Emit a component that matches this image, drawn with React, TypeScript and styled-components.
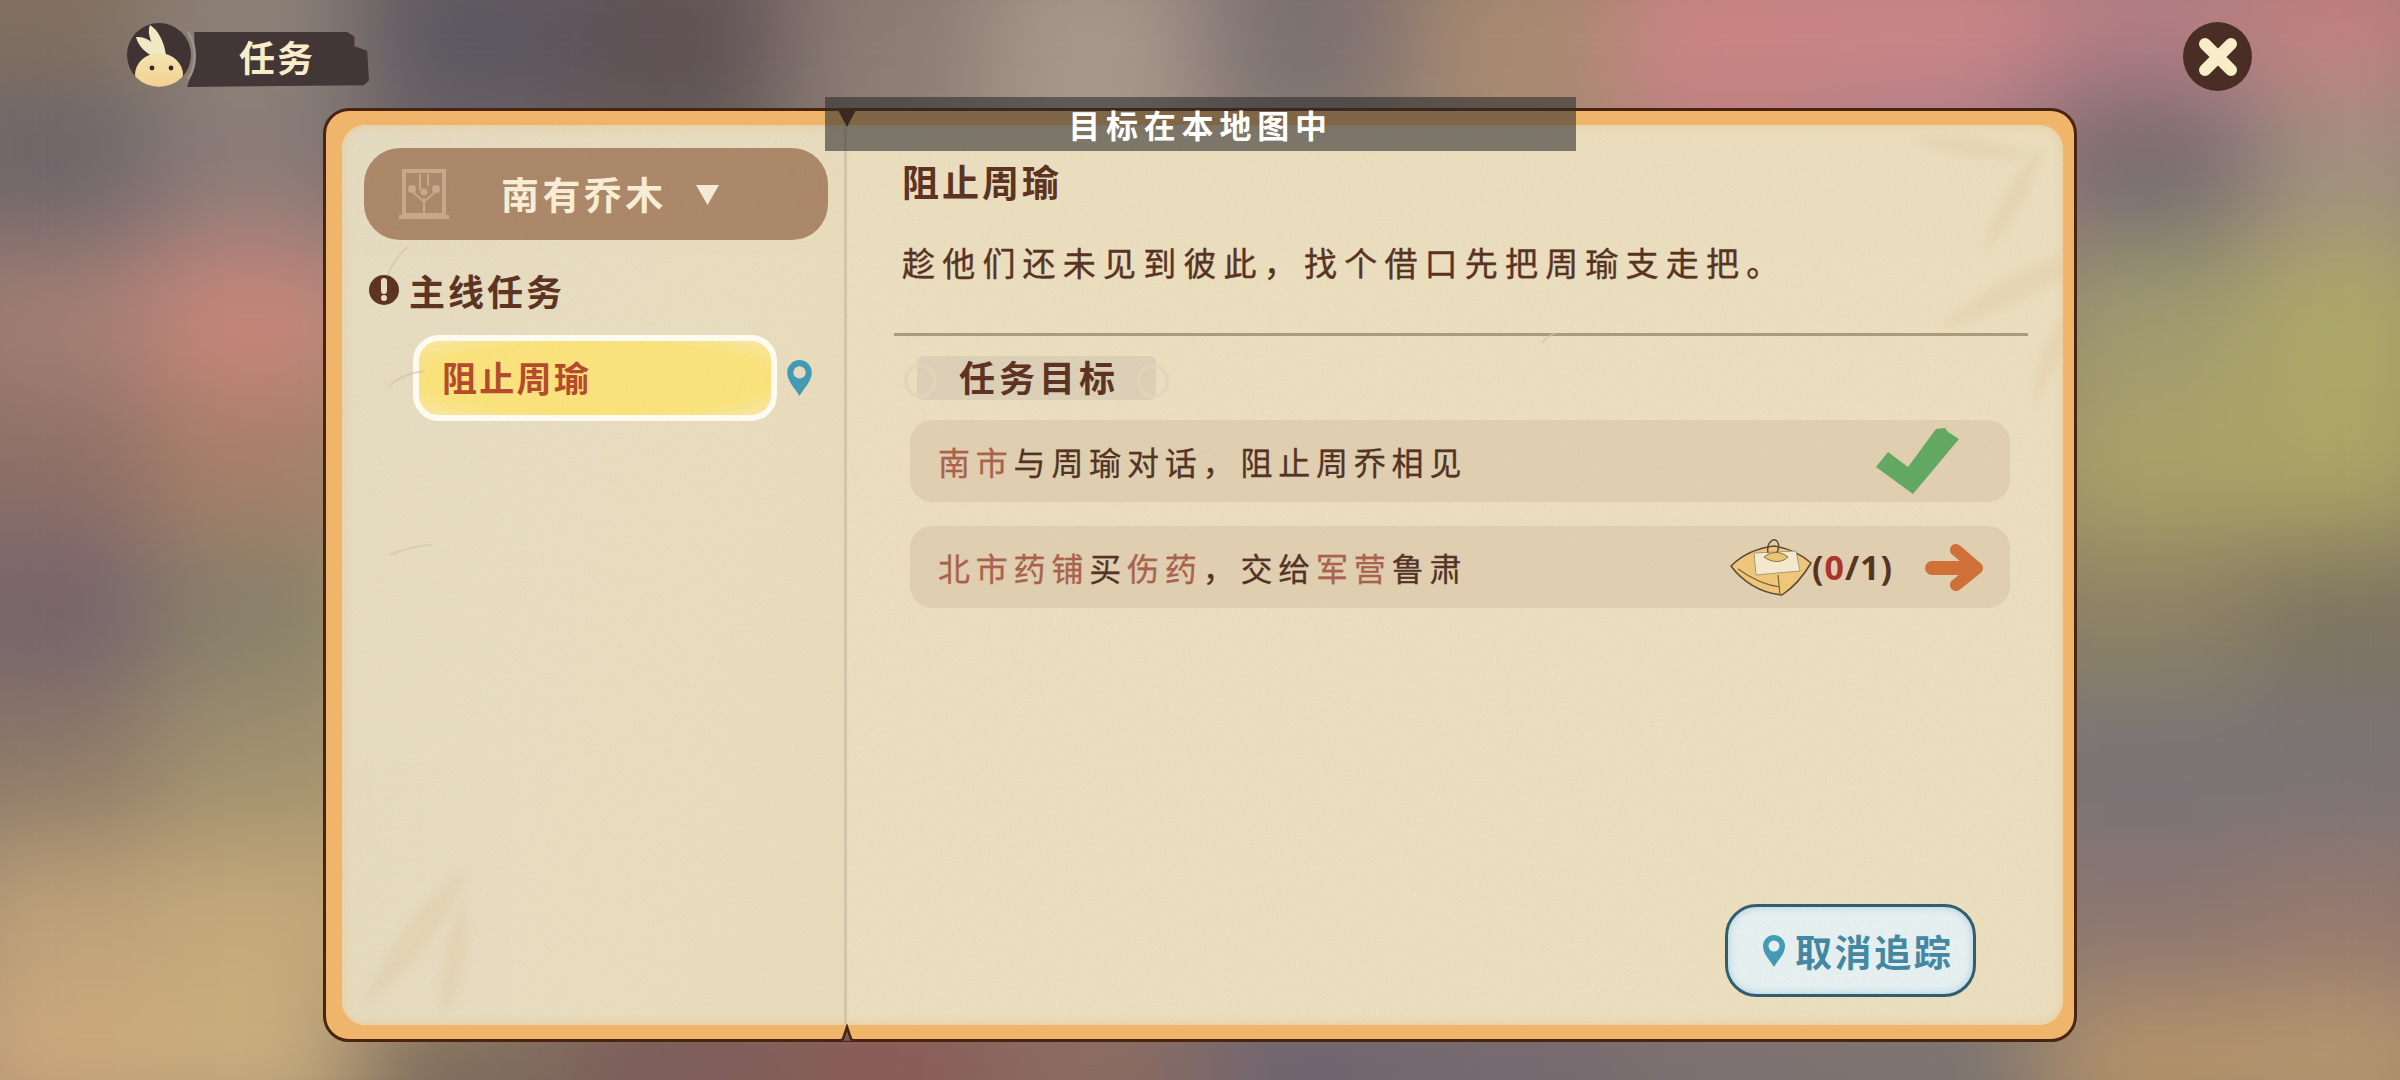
import styled, { createGlobalStyle } from 'styled-components';

const GlobalStyle = createGlobalStyle`
  html, body {
    margin: 0;
    padding: 0;
    background: #7f7068;
  }
  * {
    box-sizing: border-box;
  }
`;

const font = `'Noto Sans CJK SC', 'Noto Sans', sans-serif`;

// blurred scene behind the book, 12 x 8 colour patches
const sceneTiles = [
  ['#82705f', '#8e8278', '#5b5660', '#5e5054', '#8c7c74', '#a8988c', '#7c7070', '#a98a70', '#cf8585', '#d08688', '#b87f86', '#c58080'],
  ['#6c656a', '#8a7c78', '#6a6266', '#665a58', '#8d7f76', '#a8988a', '#857a72', '#a68b72', '#b78080', '#a87f86', '#756a70', '#a09080'],
  ['#a37f74', '#c8867a', '#9a8a7c', '#8a7a70', '#8a7a70', '#8a7a70', '#8a7a70', '#8a7a70', '#8a7a70', '#85786e', '#a09a70', '#ada868'],
  ['#8e7066', '#a87f68', '#9a8a70', '#8a7a70', '#8a7a70', '#8a7a70', '#8a7a70', '#8a7a70', '#8a7a70', '#8f8566', '#aaa268', '#aca565'],
  ['#75636c', '#87806a', '#a89a70', '#8a7a70', '#8a7a70', '#8a7a70', '#8a7a70', '#8a7a70', '#8a7a70', '#8a7f64', '#8d8264', '#7e7460'],
  ['#8e7a68', '#a0906e', '#b09a72', '#8a7a70', '#8a7a70', '#8a7a70', '#8a7a70', '#8a7a70', '#8a7a70', '#7c7674', '#787478', '#7a7476'],
  ['#bda279', '#c4a97a', '#b89f74', '#8a7a70', '#8a7a70', '#8a7a70', '#8a7a70', '#8a7a70', '#8a7a70', '#8b7a70', '#8b7570', '#95796e'],
  ['#cfa87c', '#c9ae7e', '#7d6b5c', '#7c5a58', '#8b5a54', '#8c6a60', '#6e6470', '#746870', '#7d7072', '#7c7470', '#b5946a', '#b7986f'],
];

const Page = styled.div`
  position: relative;
  width: 2400px;
  height: 1080px;
  overflow: hidden;
  padding: 22px 148px 0 126px;
  font-family: ${font};
`;

const Scene = styled.div`
  position: absolute;
  inset: -60px;
  display: grid;
  grid-template-columns: repeat(12, 1fr);
  grid-template-rows: repeat(8, 1fr);
  filter: blur(52px);
`;

const Tile = styled.div<{ $color: string }>`
  background: ${(p) => p.$color};
`;

const Header = styled.header`
  position: relative;
  display: flex;
  justify-content: space-between;
  align-items: flex-start;
  height: 70px;
`;

const Badge = styled.div`
  display: flex;
  align-items: center;
`;

const Avatar = styled.svg`
  display: block;
  width: 70px;
  height: 66px;
  margin-right: -9px;
  position: relative;
  z-index: 1;
`;

const BadgeLabel = styled.div`
  width: 182px;
  height: 55px;
  margin-top: 9px;
  padding-left: 52px;
  background: #433637;
  color: #f8edc8;
  font-size: 36px;
  font-weight: 700;
  line-height: 49px;
  letter-spacing: 2px;
  clip-path: polygon(4% 0, 88% 0, 92% 8%, 92% 26%, 99% 34%, 100% 88%, 97% 97%, 0 100%, 4% 60%);
`;

const CloseButton = styled.button`
  width: 69px;
  height: 69px;
  padding: 0;
  border: 0;
  border-radius: 50%;
  background: radial-gradient(circle, #4a2e25 78%, #5d4741 100%);
  display: flex;
  align-items: center;
  justify-content: center;
`;

const Book = styled.main`
  position: relative;
  width: 1754px;
  height: 934px;
  margin: 16px 0 0 197px;
  padding: 14px 11px 14px 16px;
  border: 3px solid #4a2412;
  border-radius: 26px;
  background: #efb56b;
`;

const Paper = styled.div`
  position: relative;
  display: flex;
  height: 100%;
  border-radius: 24px;
  overflow: hidden;
  background: #ebdfc0;

  &::after {
    content: '';
    position: absolute;
    inset: 0;
    border-radius: 24px;
    box-shadow: inset 0 0 9px 2px rgba(236, 196, 140, 0.55);
    pointer-events: none;
  }
`;

const Toast = styled.div`
  position: absolute;
  top: -14px;
  left: 499px;
  width: 751px;
  height: 54px;
  padding-top: 1px;
  background: rgba(45, 45, 45, 0.58);
  color: #fff;
  font-size: 32px;
  font-weight: 700;
  line-height: 52px;
  letter-spacing: 5.8px;
  text-align: center;
  z-index: 3;
`;

const Notch = styled.svg<{ $bottom?: boolean }>`
  position: absolute;
  left: 512px;
  width: 18px;
  height: 18px;
  ${(p) => (p.$bottom ? 'bottom: -3px;' : 'top: -1px;')}
  z-index: 2;
`;

const Decor = styled.svg`
  position: absolute;
  inset: 0;
  width: 100%;
  height: 100%;
  pointer-events: none;
`;

const SoftLeaves = styled.g`
  filter: blur(4px);
`;

const LeftPage = styled.aside`
  position: relative;
  flex: 0 0 505px;
  padding: 23px 16px 0 22px;
  background: linear-gradient(100deg, #e5dcc3 0%, #e8ddbf 60%, #e9dcbc 100%);
  border-right: 3px solid #d2c7ab;
`;

const MapSelect = styled.button`
  display: flex;
  align-items: center;
  width: 100%;
  height: 92px;
  padding: 0 0 0 34px;
  border: 0;
  border-radius: 36px;
  background: #ab8769;
  color: #f9efd8;
  font-family: ${font};
  font-size: 38px;
  font-weight: 700;
  letter-spacing: 3.4px;
`;

const MapName = styled.span`
  margin-left: 51px;
  margin-right: 28px;
  margin-top: -4px;
`;

const SectionTitle = styled.h3`
  display: flex;
  align-items: center;
  gap: 10px;
  height: 40px;
  margin: 30px 0 0 5px;
  color: #5a3020;
  font-size: 36px;
  font-weight: 700;
  letter-spacing: 3px;
`;

const QuestRow = styled.div`
  display: flex;
  align-items: center;
  gap: 9px;
  margin: 25px 0 0 49px;
`;

const QuestItem = styled.div`
  width: 364px;
  height: 86px;
  padding-left: 23px;
  border: 6px solid #fffdf4;
  border-radius: 26px;
  background: radial-gradient(ellipse at center, #fbe37c 70%, #f8e9a8 100%);
  color: #b5482a;
  font-size: 35px;
  font-weight: 700;
  line-height: 72px;
  letter-spacing: 2.3px;
`;

const RightPage = styled.section`
  position: relative;
  flex: 1;
  display: flex;
  flex-direction: column;
  padding: 32px 35px 0 55px;
`;

const QuestTitle = styled.h2`
  margin: 0;
  color: #5a3020;
  font-size: 37px;
  font-weight: 700;
  line-height: 48px;
  letter-spacing: 3px;
`;

const QuestText = styled.p`
  margin: 35px 0 0;
  color: #55301f;
  font-size: 33px;
  line-height: 44px;
  letter-spacing: 7.2px;
  -webkit-text-stroke: 0.4px #55301f;
  white-space: nowrap;
`;

const Divider = styled.hr`
  height: 3px;
  margin: 49px 0 0 -8px;
  border: 0;
  background: #a99a7e;
`;

const GoalsLabel = styled.h3`
  position: relative;
  width: 239px;
  height: 44px;
  margin: 20px 0 0 15px;
  padding-left: 42px;
  border-radius: 6px;
  background: #dcd0b8;
  color: #5a3020;
  font-size: 36px;
  font-weight: 700;
  line-height: 41px;
  letter-spacing: 4px;

  &::before,
  &::after {
    content: '';
    position: absolute;
    top: 8px;
    width: 26px;
    height: 28px;
    border: 3px solid #e2d6bd;
    border-radius: 50%;
  }

  &::before {
    left: -13px;
  }

  &::after {
    right: -13px;
  }
`;

const Goals = styled.div`
  display: flex;
  flex-direction: column;
  gap: 24px;
  margin: 20px 18px 0 8px;
`;

const Goal = styled.div`
  display: flex;
  align-items: center;
  height: 82px;
  padding: 0 27px 0 28px;
  border-radius: 22px;
  background: #e0cfb1;
  color: #4f3022;
  font-size: 32px;
  letter-spacing: 5.8px;
  -webkit-text-stroke: 0.3px currentColor;
`;

const Place = styled.span`
  color: #a8604a;
`;

const GoalEnd = styled.div`
  display: flex;
  align-items: center;
  margin-left: auto;
`;

const Count = styled.span`
  margin-right: 32px;
  color: #55301f;
  font-family: 'Noto Sans', sans-serif;
  font-size: 34px;
  font-weight: 700;
  letter-spacing: 1px;
  -webkit-text-stroke: 0;
`;

const CountDone = styled.span`
  color: #ae3028;
`;

const TrackButton = styled.button`
  display: flex;
  align-items: center;
  gap: 9px;
  align-self: flex-end;
  width: 251px;
  height: 93px;
  margin: auto 52px 28px 0;
  padding: 0 0 0 34px;
  border: 3px solid #2b5c70;
  border-radius: 32px;
  background: #e6f1f3;
  box-shadow: inset 0 0 8px #a9cfe2;
  color: #3f87a3;
  font-family: ${font};
  font-size: 37px;
  font-weight: 700;
  letter-spacing: 2.6px;
`;

function Pin({ width, height, hole }: { width: number; height: number; hole: string }) {
  return (
    <svg width={width} height={height} viewBox="0 0 24 34">
      <path
        d="M12 33C8 26 1 20 1 12a11 11 0 0 1 22 0c0 8-7 14-11 21z"
        fill="#3f9ab6"
      />
      <circle cx="12" cy="12" r="5.5" fill={hole} />
    </svg>
  );
}

function App() {
  return (
    <>
      <GlobalStyle />
      <Page>
        <Scene>
          {sceneTiles.flat().map((color, i) => (
            <Tile key={i} $color={color} />
          ))}
        </Scene>

        <Header>
          <Badge>
            <Avatar viewBox="0 0 70 66">
              <defs>
                <linearGradient id="head" x1="0" y1="0" x2="0" y2="1">
                  <stop offset="0" stopColor="#f5e4b0" />
                  <stop offset="0.7" stopColor="#f2d394" />
                  <stop offset="1" stopColor="#eeaa68" />
                </linearGradient>
                <clipPath id="disc">
                  <ellipse cx="33" cy="33" rx="32" ry="32" />
                </clipPath>
              </defs>
              <path d="M62 10c9 14 9 34 0 47" fill="none" stroke="#9c938c" strokeWidth="2.5" />
              <ellipse cx="33" cy="33" rx="32" ry="32" fill="#3f3334" />
              <g clipPath="url(#disc)">
                <path d="M24 3c8 5 14 16 16 30l-8 0C27 24 20 12 24 3z" fill="#f3e8c4" />
                <path d="M10 15c10-1 20 6 26 18l-8 2C20 31 12 24 10 15z" fill="#f3e8c4" />
                <ellipse cx="33" cy="53" rx="24" ry="22" fill="url(#head)" />
                <circle cx="26" cy="46" r="2.4" fill="#3a2a24" />
                <circle cx="45" cy="46" r="2.4" fill="#3a2a24" />
              </g>
            </Avatar>
            <BadgeLabel>任务</BadgeLabel>
          </Badge>
          <CloseButton aria-label="关闭">
            <svg width="40" height="40" viewBox="0 0 40 40">
              <path
                d="M7 7L20 20M33 7L20 20M7 33L20 20M33 33L20 20"
                stroke="#f7edc8"
                strokeWidth="12"
                strokeLinecap="round"
              />
            </svg>
          </CloseButton>
        </Header>

        <Book>
          <Toast>目标在本地图中</Toast>
          <Notch viewBox="0 0 18 18">
            <path d="M0 0h18L9 17z" fill="#4a2412" />
          </Notch>
          <Notch $bottom viewBox="0 0 18 18">
            <path d="M0 18L5 15L9 3L13 15L18 18z" fill="#7f5a55" stroke="#4a2412" strokeWidth="2.5" />
          </Notch>
          <Paper>
            <LeftPage>
              <MapSelect>
                <svg width="52" height="52" viewBox="0 0 52 52" fill="none" stroke="#c8a88c">
                  <path d="M6 3h40v44H6z" strokeWidth="4" />
                  <path d="M1 49h50" strokeWidth="4" />
                  <path d="M26 47V30M26 34L15 24M26 34L37 24M22 6v16M30 6v12" strokeWidth="2" />
                  <circle cx="14" cy="21" r="4" fill="#c8a88c" stroke="none" />
                  <circle cx="38" cy="21" r="4" fill="#c8a88c" stroke="none" />
                  <circle cx="26" cy="24" r="3.5" fill="#c8a88c" stroke="none" />
                </svg>
                <MapName>南有乔木</MapName>
                <svg width="25" height="23" viewBox="0 0 25 23">
                  <path d="M1 2h23L12.5 22z" fill="#f6ecd9" />
                </svg>
              </MapSelect>
              <SectionTitle>
                <svg width="30" height="30" viewBox="0 0 30 30">
                  <circle cx="15" cy="15" r="15" fill="#5a3020" />
                  <path d="M15 6v10" stroke="#e8ddbf" strokeWidth="6" strokeLinecap="round" />
                  <circle cx="15" cy="23" r="3" fill="#e8ddbf" />
                </svg>
                主线任务
              </SectionTitle>
              <QuestRow>
                <QuestItem>阻止周瑜</QuestItem>
                <Pin width={27} height={38} hole="#e8ddbf" />
              </QuestRow>
            </LeftPage>

            <RightPage>
              <QuestTitle>阻止周瑜</QuestTitle>
              <QuestText>趁他们还未见到彼此，找个借口先把周瑜支走把。</QuestText>
              <Divider />
              <GoalsLabel>任务目标</GoalsLabel>
              <Goals>
                <Goal>
                  <Place>南市</Place>与周瑜对话，阻止周乔相见
                  <GoalEnd>
                    <svg width="84" height="68" viewBox="0 0 84 68" style={{ marginRight: 23 }}>
                      <path
                        d="M0 40L12 25L32 40L60 2L69 1L72 5L83 12L37 67z"
                        fill="#5fa862"
                      />
                    </svg>
                  </GoalEnd>
                </Goal>
                <Goal>
                  <Place>北市药铺</Place>买<Place>伤药</Place>，交给<Place>军营</Place>鲁肃
                  <GoalEnd>
                    <svg width="82" height="60" viewBox="0 0 82 60">
                      <path
                        d="M1 29C12 18 28 11 44 9C58 11 72 18 81 26C74 38 64 50 52 58C30 56 12 44 1 29z"
                        fill="#eec77a"
                        stroke="#5b4630"
                        strokeWidth="1.5"
                      />
                      <path d="M24 16L66 14L70 34L26 38z" fill="#f4ead0" stroke="#a99a70" strokeWidth="1" />
                      <path d="M48 38L50 58M8 32C22 42 34 48 50 50" stroke="#7a6030" strokeWidth="1.2" fill="none" />
                      <path d="M38 16C36 4 46 -1 48 6C50 10 48 14 46 18" stroke="#5b4630" strokeWidth="1.5" fill="none" />
                      <path d="M34 20C42 14 50 14 58 20C52 26 42 26 34 20z" fill="#e9c875" stroke="#8a7040" strokeWidth="1" />
                    </svg>
                    <Count>
                      (<CountDone>0</CountDone>/1)
                    </Count>
                    <svg width="58" height="47" viewBox="0 0 58 47">
                      <path d="M7 24H46" stroke="#d06f35" strokeWidth="14" strokeLinecap="round" />
                      <path
                        d="M31 6L52 24L31 41"
                        fill="none"
                        stroke="#d06f35"
                        strokeWidth="12"
                        strokeLinecap="round"
                        strokeLinejoin="round"
                      />
                    </svg>
                  </GoalEnd>
                </Goal>
              </Goals>
              <TrackButton>
                <Pin width={24} height={34} hole="#e6f1f3" />
                取消追踪
              </TrackButton>
            </RightPage>

            <Decor viewBox="0 0 1721 900" fill="none">
              <defs>
                <filter id="grain">
                  <feTurbulence type="fractalNoise" baseFrequency="0.55" numOctaves="3" />
                  <feColorMatrix values="0 0 0 0 0.55  0 0 0 0 0.42  0 0 0 0 0.25  0.9 0 0 0 -0.25" />
                </filter>
              </defs>
              <rect width="1721" height="900" filter="url(#grain)" opacity="0.16" />
              <SoftLeaves fill="#dcc39c" opacity="0.32">
                <path d="M1572 14C1620 8 1660 16 1690 30C1650 38 1610 32 1572 14z" />
                <path d="M1700 20C1670 50 1650 90 1640 130C1670 100 1695 60 1700 20z" />
                <path d="M1721 130C1680 140 1630 170 1595 205C1640 195 1690 175 1721 150z" />
                <path d="M1721 190C1700 220 1690 250 1692 285C1705 260 1718 235 1721 220z" />
                <path d="M20 880C40 830 80 770 125 745C110 790 70 850 20 880z" />
                <path d="M100 895C125 850 130 800 120 775C105 810 95 860 100 895z" />
              </SoftLeaves>
              <g stroke="#cfc3a4" strokeWidth="2" opacity="0.6">
                <path d="M46 150C50 138 56 130 66 122" />
                <path d="M46 262C54 254 66 248 82 246" />
                <path d="M48 430C62 424 74 420 90 420" />
                <path d="M1200 218C1204 212 1208 210 1214 208" />
              </g>
            </Decor>
          </Paper>
        </Book>
      </Page>
    </>
  );
}

export default App;
